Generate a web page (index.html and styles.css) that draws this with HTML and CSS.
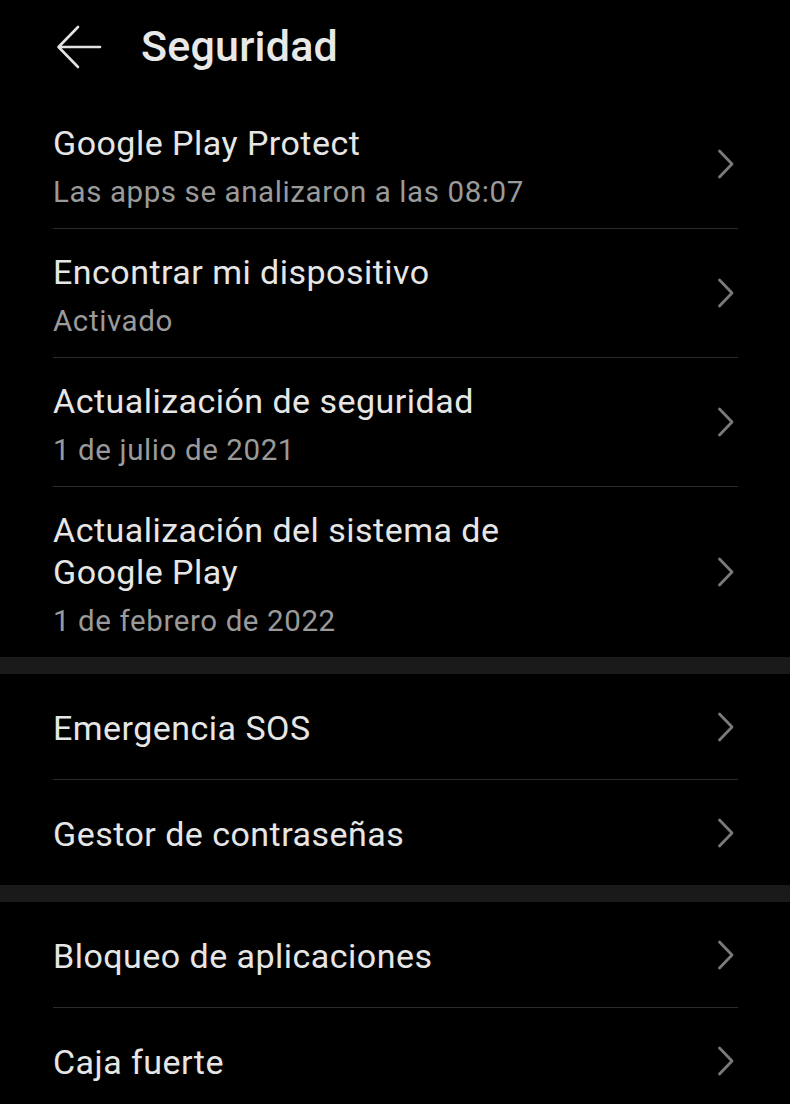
FILE: index.html
```html
<!DOCTYPE html>
<html lang="es">
<head>
<meta charset="utf-8">
<title>Seguridad</title>
<link rel="stylesheet" href="styles.css">
</head>
<body>
<header class="header">
  <svg class="back" width="46" height="44" viewBox="0 0 46 44" aria-hidden="true">
    <path d="M44 22 H3 M22 2 L2.5 22 L22 42" fill="none" stroke="#e2e2e2" stroke-width="2.6" stroke-linecap="round" stroke-linejoin="round"/>
  </svg>
  <h1 class="title">Seguridad</h1>
</header>

<section class="group">
  <div class="row two">
    <div class="text">
      <div class="label">Google Play Protect</div>
      <div class="sub">Las apps se analizaron a las 08:07</div>
    </div>
    <svg class="chev" width="18" height="30" viewBox="0 0 18 30" aria-hidden="true"><path d="M2.5 2 L15 15 L2.5 28" fill="none" stroke="#7a7a7a" stroke-width="2.8" stroke-linecap="round" stroke-linejoin="round"/></svg>
  </div>
  <div class="row two">
    <div class="text">
      <div class="label">Encontrar mi dispositivo</div>
      <div class="sub">Activado</div>
    </div>
    <svg class="chev" width="18" height="30" viewBox="0 0 18 30" aria-hidden="true"><path d="M2.5 2 L15 15 L2.5 28" fill="none" stroke="#7a7a7a" stroke-width="2.8" stroke-linecap="round" stroke-linejoin="round"/></svg>
  </div>
  <div class="row two">
    <div class="text">
      <div class="label">Actualización de seguridad</div>
      <div class="sub">1 de julio de 2021</div>
    </div>
    <svg class="chev" width="18" height="30" viewBox="0 0 18 30" aria-hidden="true"><path d="M2.5 2 L15 15 L2.5 28" fill="none" stroke="#7a7a7a" stroke-width="2.8" stroke-linecap="round" stroke-linejoin="round"/></svg>
  </div>
  <div class="row two last">
    <div class="text">
      <div class="label">Actualización del sistema de<br>Google Play</div>
      <div class="sub">1 de febrero de 2022</div>
    </div>
    <svg class="chev" width="18" height="30" viewBox="0 0 18 30" aria-hidden="true"><path d="M2.5 2 L15 15 L2.5 28" fill="none" stroke="#7a7a7a" stroke-width="2.8" stroke-linecap="round" stroke-linejoin="round"/></svg>
  </div>
</section>

<div class="band"></div>

<section class="group">
  <div class="row one">
    <div class="text"><div class="label">Emergencia SOS</div></div>
    <svg class="chev" width="18" height="30" viewBox="0 0 18 30" aria-hidden="true"><path d="M2.5 2 L15 15 L2.5 28" fill="none" stroke="#7a7a7a" stroke-width="2.8" stroke-linecap="round" stroke-linejoin="round"/></svg>
  </div>
  <div class="row one last">
    <div class="text"><div class="label">Gestor de contraseñas</div></div>
    <svg class="chev" width="18" height="30" viewBox="0 0 18 30" aria-hidden="true"><path d="M2.5 2 L15 15 L2.5 28" fill="none" stroke="#7a7a7a" stroke-width="2.8" stroke-linecap="round" stroke-linejoin="round"/></svg>
  </div>
</section>

<div class="band"></div>

<section class="group">
  <div class="row one">
    <div class="text"><div class="label">Bloqueo de aplicaciones</div></div>
    <svg class="chev" width="18" height="30" viewBox="0 0 18 30" aria-hidden="true"><path d="M2.5 2 L15 15 L2.5 28" fill="none" stroke="#7a7a7a" stroke-width="2.8" stroke-linecap="round" stroke-linejoin="round"/></svg>
  </div>
  <div class="row one last">
    <div class="text"><div class="label">Caja fuerte</div></div>
    <svg class="chev" width="18" height="30" viewBox="0 0 18 30" aria-hidden="true"><path d="M2.5 2 L15 15 L2.5 28" fill="none" stroke="#7a7a7a" stroke-width="2.8" stroke-linecap="round" stroke-linejoin="round"/></svg>
  </div>
</section>
</body>
</html>
```

FILE: styles.css
```css
html, body {
  margin: 0;
  padding: 0;
  background: #000;
}
body {
  font-family: Roboto, "Liberation Sans", sans-serif;
  color: #e6e6e6;
  width: 790px;
  overflow: hidden;
}
.header {
  height: 100px;
  display: flex;
  align-items: center;
  padding-left: 56px;
  box-sizing: border-box;
}
.back {
  display: block;
  flex: none;
  margin-top: -6px;
}
.title {
  margin: -8px 0 0 39px;
  font-size: 43px;
  font-weight: 500;
  line-height: 50px;
  color: #e8e8e8;
  letter-spacing: 0.2px;
}
.group {
  padding: 0 52px 0 53px;
}
.row {
  display: flex;
  align-items: center;
  border-bottom: 1px solid #2b2b2b;
}
.row.last {
  border-bottom: none;
}
.row.two {
  padding: 22px 0 16px;
}
.row.two .chev {
  margin-top: -6px;
}
.row.one {
  padding: 33px 0 30px;
}
.row.one .chev {
  margin-top: -3px;
}
.text {
  flex: 1;
  min-width: 0;
}
.label {
  font-size: 34px;
  line-height: 42px;
  letter-spacing: 0.47px;
  color: #e6e6e6;
}
.sub {
  font-size: 29.5px;
  line-height: 40px;
  letter-spacing: 0.6px;
  margin-top: 8px;
  color: #9a9a9a;
}
.chev {
  display: block;
  flex: none;
  margin-right: 3px;
}
.band {
  height: 17px;
  background: #1a1a1a;
}
```
